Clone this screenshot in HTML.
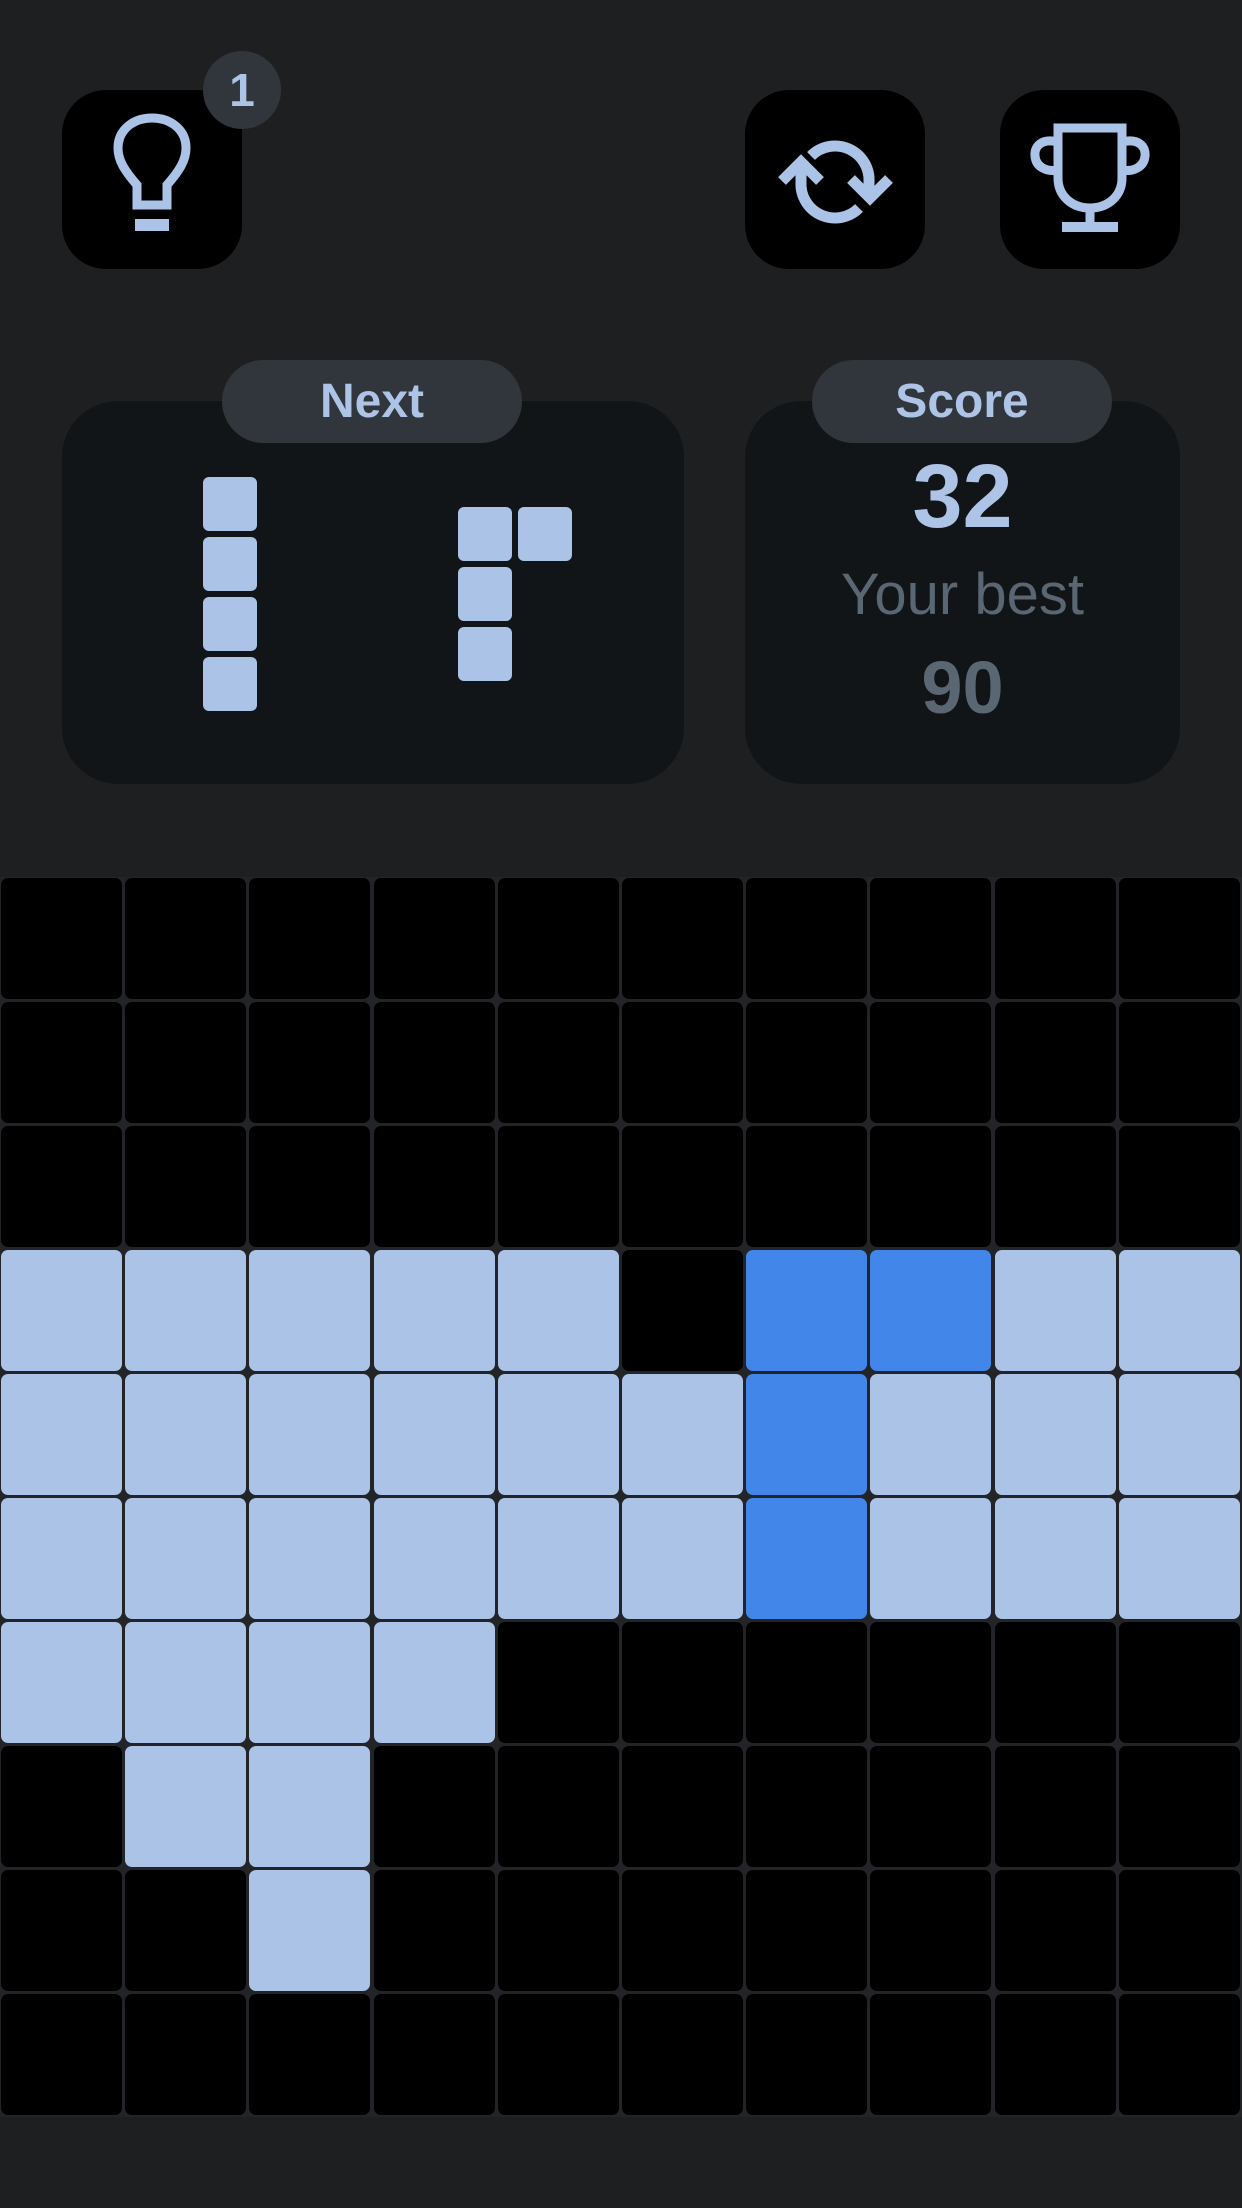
<!DOCTYPE html>
<html><head><meta charset="utf-8"><style>
*{margin:0;padding:0;box-sizing:border-box}
body{width:1242px;height:2208px;background:#1e1f21;position:relative;overflow:hidden;font-family:"Liberation Sans",Arial,sans-serif}
.btn{position:absolute;top:90px;width:180px;height:179px;background:#000;border-radius:44px}
.badge{position:absolute;left:203px;top:51px;width:78px;height:78px;border-radius:50%;background:#31363c;color:#adc4e6;font-weight:bold;font-size:46px;text-align:center;line-height:78px}
.panel{position:absolute;top:401px;height:383px;background:#121517;border-radius:56px}
.pill{position:absolute;top:360px;width:300px;height:83px;border-radius:42px;background:#31363c;color:#adc4e6;font-weight:bold;font-size:48px;text-align:center;line-height:83px}
.pc{position:absolute;width:54px;height:54px;background:#aac3e6;border-radius:6px}
.txt{position:absolute;left:745px;width:435px;text-align:center}
#grid{position:absolute;left:0;top:877px;width:1242px;height:1240px;background:#222427}
.c{position:absolute;width:121px;height:121px;border-radius:7px;background:#000}
.l{background:#aac3e6}.b{background:#4286e9}
</style></head><body>
<div class="btn" style="left:62px">
<svg width="180" height="179" viewBox="0 0 180 179"><g fill="none" stroke="#aac3e6" stroke-width="9"><path d="M75 115 L75 95 C62 80 56 70 56 58 C56 40 71 28 90 28 C109 28 124 40 124 58 C124 70 118 80 105 95 L105 115 Z" stroke-linejoin="miter"/></g><rect x="73" y="129" width="34" height="12" fill="#aac3e6"/></svg>
</div>
<div class="badge">1</div>
<div class="btn" style="left:745px">
<svg width="180" height="179" viewBox="0 0 180 179"><g fill="none" stroke="#aac3e6" stroke-width="11"><path d="M66 66 A34 34 0 0 1 124 92 L124 108"/><path d="M114 118 A34 34 0 0 1 56 92 L56 72"/><path d="M106 89 L125 108 L144 89"/><path d="M37 91 L56 72 L75 91"/></g></svg>
</div>
<div class="btn" style="left:1000px">
<svg width="180" height="179" viewBox="0 0 180 179"><g fill="none" stroke="#aac3e6" stroke-width="9"><path d="M58 38 L122 38 L122 88 C122 106 108 118 90 118 C72 118 58 106 58 88 Z"/><path d="M58 52 C42 48 34 56 35 66 C36 78 48 82 58 80"/><path d="M122 52 C138 48 146 56 145 66 C144 78 132 82 122 80"/><path d="M90 118 L90 137"/></g><rect x="62" y="132" width="56" height="10" fill="#aac3e6"/></svg>
</div>
<div class="panel" style="left:62px;width:622px"></div>
<div class="panel" style="left:745px;width:435px"></div>
<div class="pill" style="left:222px">Next</div>
<div class="pill" style="left:812px">Score</div>
<div class="pc" style="left:203px;top:477px"></div>
<div class="pc" style="left:203px;top:537px"></div>
<div class="pc" style="left:203px;top:597px"></div>
<div class="pc" style="left:203px;top:657px"></div>
<div class="pc" style="left:458px;top:507px"></div>
<div class="pc" style="left:518px;top:507px"></div>
<div class="pc" style="left:458px;top:567px"></div>
<div class="pc" style="left:458px;top:627px"></div>
<div class="txt" style="top:447px;font-size:90px;font-weight:bold;color:#adc4e6;line-height:100px">32</div>
<div class="txt" style="top:560px;font-size:58px;color:#5b6673;line-height:70px">Your best</div>
<div class="txt" style="top:648px;font-size:74px;font-weight:bold;color:#5b6673;line-height:80px">90</div>
<div id="grid"></div>
<script>
var rows=["..........","..........","..........","lllll.bbll","llllllblll","llllllblll","llll......",".ll.......","..l.......",".........."];
var g=document.getElementById('grid'),h='';
for(var r=0;r<10;r++)for(var c=0;c<10;c++){var ch=rows[r][c];var cl=ch=='l'?' l':ch=='b'?' b':'';
h+='<div class="c'+cl+'" style="left:'+(Math.round(c*124.2)+1)+'px;top:'+(r*124+1)+'px"></div>';}
g.innerHTML=h;
</script>
</body></html>
